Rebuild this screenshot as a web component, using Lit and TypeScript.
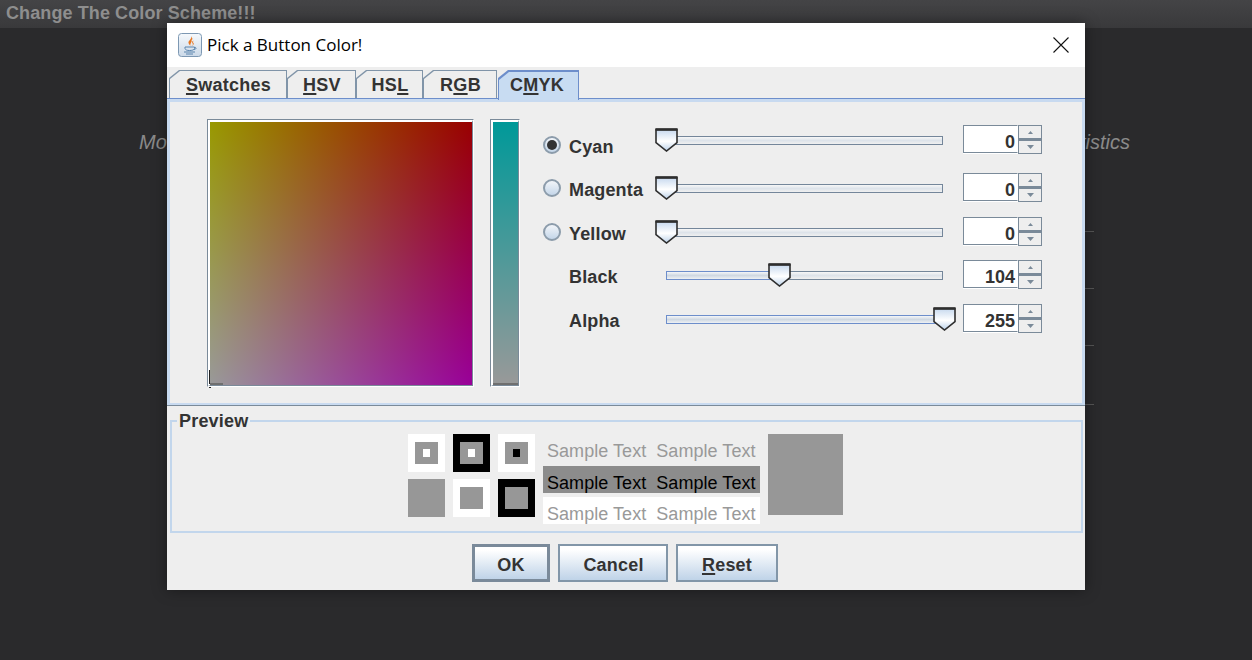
import { LitElement, html, css, svg } from 'lit';
import { customElement } from 'lit/decorators.js';

const TABS = [
  { pre: '', key: 'S', post: 'watches', width: 118 },
  { pre: '', key: 'H', post: 'SV', width: 69 },
  { pre: 'HS', key: 'L', post: '', width: 67 },
  { pre: 'R', key: 'G', post: 'B', width: 74 },
  { pre: 'C', key: 'M', post: 'YK', width: 81, active: true },
];

const LABELS = [
  { name: 'Cyan', radio: true, selected: true },
  { name: 'Magenta', radio: true },
  { name: 'Yellow', radio: true },
  { name: 'Black' },
  { name: 'Alpha' },
];

const VALUES = [0, 0, 0, 104, 255];
const THUMB_RANGE = 278;

const thumb = svg`
  <svg class="thumb-art" width="23" height="24" viewBox="0 0 23 24">
    <defs>
      <linearGradient id="thumb-fill" x1="0" y1="0" x2="0" y2="1">
        <stop offset="0" stop-color="#c6d8ee"></stop>
        <stop offset="0.55" stop-color="#ffffff"></stop>
        <stop offset="1" stop-color="#bcd2ea"></stop>
      </linearGradient>
    </defs>
    <path d="M1 1.500H22V14.500L11.500 23L1 14.500Z" fill="url(#thumb-fill)" stroke="#2e2e2e" stroke-width="1.600"></path>
    <path d="M0.500 1.500H22.500" stroke="#2e2e2e" stroke-width="2.600"></path>
  </svg>`;

@customElement('app-root')
export class AppRoot extends LitElement {
  static styles = css`
    :host {
      display: block;
      position: relative;
      height: 660px;
      overflow: hidden;
      background: #2a2a2c;
      font-family: 'Liberation Sans', Arial, sans-serif;
      color: #333;
    }
    .topbar {
      height: 28px;
      padding-left: 6px;
      background: linear-gradient(#444446, #39393b);
      color: #8e8e8e;
      font-size: 18px;
      font-weight: bold;
      line-height: 27px;
      letter-spacing: 0.1px;
    }
    .intro {
      display: flex;
      justify-content: space-between;
      margin: 0;
      padding: 102px 122px 0 139px;
      color: #8a8a8a;
      font-size: 20px;
      font-style: italic;
      line-height: 24px;
    }
    .rows {
      margin: 20px 158px 0 200px;
    }
    .rows div {
      height: 57px;
      border-bottom: 1px solid #555;
      box-sizing: border-box;
    }
    .rows div:first-child {
      height: 58px;
    }
    .rows div:last-child {
      height: 59px;
    }

    .dialog {
      position: absolute;
      left: 167px;
      top: 23px;
      width: 918px;
      height: 567px;
      display: flex;
      flex-direction: column;
      background: #eeeeee;
      box-shadow: 0 0 14px rgba(0, 0, 0, 0.4);
    }
    .titlebar {
      flex: none;
      height: 44px;
      display: flex;
      align-items: center;
      padding: 0 16px 0 11px;
      background: #fff;
      color: #000;
      font-family: 'Open Sans', sans-serif;
      font-size: 17px;
      line-height: 46px;
    }
    .titlebar .java {
      margin-right: 5px;
    }
    .titlebar .close {
      margin-left: auto;
    }

    .tabs {
      flex: none;
      height: 31px;
      box-sizing: border-box;
      padding: 3px 0 0 2px;
      display: flex;
    }
    .tab {
      box-sizing: border-box;
      height: 28px;
      background: #8094a8;
      clip-path: polygon(0 8px, 10px 0, 100% 0, 100% 100%, 0 100%);
    }
    .tab span {
      display: block;
      height: 27px;
      margin: 1px 1px 0 1px;
      padding-left: 1px;
      background: #eeeeee;
      clip-path: polygon(0 8px, 10px 0, 100% 0, 100% 100%, 0 100%);
      font-size: 18px;
      font-weight: bold;
      line-height: 29px;
      letter-spacing: 0.25px;
      text-align: center;
    }
    .tab.active {
      height: 30px;
      margin-left: 1px;
      background: #6d8ecb;
      position: relative;
      z-index: 1;
    }
    .tab.active span {
      height: 29px;
      margin: 2px 1px 0 1px;
      padding: 0 3px 0 0;
      background: #c8dcf2;
      line-height: 27px;
    }
    u {
      text-decoration-thickness: 2px;
      text-underline-offset: 2px;
    }

    .panel {
      flex: none;
      height: 308px;
      box-sizing: border-box;
      border-top: 1px solid #6d8ecb;
      border-bottom: 1px solid #7a8a99;
    }
    .panel-in {
      height: 100%;
      box-sizing: border-box;
      border: solid #c8daf0;
      border-width: 3px 3px 2px 3px;
      padding: 17px 0 0 37px;
      display: flex;
      align-items: flex-start;
    }
    .well {
      flex: none;
      border: 1px solid;
      border-color: #7a8a99 #fff #fff #7a8a99;
    }
    .well-in {
      position: relative;
      height: 263px;
      border: solid;
      border-width: 2px 1px 1px 2px;
      border-color: #fff #7a8a99 #7a8a99 #fff;
    }
    .square {
      width: 262px;
      background:
        linear-gradient(to right, #009900, #000000),
        linear-gradient(to bottom, #000000, #000099),
        #990000;
      background-blend-mode: screen;
    }
    .strip {
      width: 25px;
      background: linear-gradient(#009999, #999999);
    }
    .well.second {
      margin-left: 16px;
    }
    .bar {
      position: absolute;
      left: 0;
      bottom: 0;
      height: 2px;
      background: #6f6f6f;
    }
    .square .bar {
      width: 13px;
    }
    .strip .bar {
      width: 100%;
    }
    .tick {
      position: absolute;
      left: -1px;
      bottom: 1px;
      width: 1px;
      height: 14px;
      background: #222;
    }
    .dot {
      position: absolute;
      left: -1px;
      bottom: -3px;
      width: 2px;
      height: 1px;
      background: #222;
    }

    .labels {
      flex: none;
      width: 112px;
      margin: 6px 0 0 23px;
      display: grid;
      grid-template-rows: 44px 43px 44px 43px 44px;
    }
    .label {
      display: flex;
      align-items: center;
      padding-left: 26px;
      font-size: 18px;
      font-weight: bold;
      letter-spacing: 0.15px;
    }
    .label.has-radio {
      padding-left: 0;
    }
    .radio {
      flex: none;
      box-sizing: border-box;
      width: 18px;
      height: 18px;
      margin: 0 8px 5px 0;
      border: 2px solid #8c9cab;
      border-radius: 50%;
      background: linear-gradient(#f2f5f9, #c4d6e9);
      display: flex;
      align-items: center;
      justify-content: center;
    }
    .radio i {
      display: block;
      width: 10px;
      height: 10px;
      border-radius: 50%;
      background: #333;
    }
    .controls {
      flex: none;
      margin-top: 6px;
      display: grid;
      grid-template-rows: 48px 44px 43px 44px 29px;
    }
    .control {
      display: flex;
      height: 29px;
      align-items: center;
    }
    .slider {
      position: relative;
      flex: none;
      width: 289px;
      height: 24px;
      margin-right: 19px;
      display: flex;
      align-items: center;
      padding-left: 11px;
      box-sizing: border-box;
    }
    .track {
      width: 277px;
      display: flex;
      margin-top: 1px;
    }
    .fill,
    .rest {
      box-sizing: border-box;
      height: 9px;
      border: 1px solid #74869a;
      background: linear-gradient(#f7f7f7, #dde3ea 50%, #f0f0f0);
    }
    .fill {
      flex: none;
      border-color: #6d8ecb;
      border-right: none;
      background: linear-gradient(#f4f6f8, #cfd8e2 50%, #eef1f4);
    }
    .rest {
      flex: 1;
      border-left: none;
    }
    .thumb {
      position: absolute;
      top: 0;
      height: 24px;
    }
    .thumb-art {
      display: block;
    }
    .spinner {
      flex: none;
      width: 79px;
      height: 29px;
      display: flex;
    }
    .field {
      box-sizing: border-box;
      width: 55px;
      height: 28px;
      padding: 4px 2px 0 0;
      border: 1px solid #7a8a99;
      border-right-color: #fff;
      box-shadow: 0 1px #fff;
      background: #fff;
      font-size: 18px;
      font-weight: bold;
      line-height: 24px;
      text-align: right;
    }
    .steps {
      flex: 1;
      display: grid;
      grid-template-rows: 14px 15px;
    }
    .step {
      box-sizing: border-box;
      border: 1px solid #7a8a99;
      background: #eeeeee;
      display: flex;
      align-items: center;
      justify-content: center;
    }
    .step + .step {
      border-top-width: 2px;
    }

    .preview {
      flex: none;
      position: relative;
      box-sizing: border-box;
      height: 113px;
      margin: 14px 2px 0 3px;
      padding: 12px 2px 0 0;
      border: 2px solid #c2d6ec;
      display: flex;
      justify-content: center;
    }
    .legend {
      position: absolute;
      left: 5px;
      top: -11px;
      padding: 0 2px;
      background: #eeeeee;
      font-size: 18px;
      font-weight: bold;
      line-height: 20px;
      letter-spacing: 0.2px;
    }
    .swatches {
      display: grid;
      grid-template-columns: repeat(3, 37px);
      grid-template-rows: 38px 38px;
      gap: 7px 8px;
    }
    .swatch {
      display: flex;
      align-items: center;
      justify-content: center;
    }
    .swatch b {
      width: 23px;
      height: 22px;
      background: #979797;
      display: flex;
      align-items: center;
      justify-content: center;
    }
    .swatch i {
      display: block;
      width: 7px;
      height: 8px;
    }
    .white {
      background: #fff;
    }
    .black {
      background: #000;
    }
    .gray {
      background: #979797;
    }
    .samples {
      width: 217px;
      margin-left: 8px;
      display: grid;
      grid-template-rows: 32px 27px 27px;
      font-size: 18px;
    }
    .sample {
      box-sizing: border-box;
      display: flex;
      gap: 10px;
      padding: 2px 0 0 4px;
      align-items: center;
      color: #999;
      line-height: 20px;
      letter-spacing: 0.05px;
    }
    .sample.on-gray {
      padding-top: 7px;
      background: #8c8c8c;
      color: #000;
    }
    .sample.on-white {
      padding-top: 7px;
      background: #fff;
      margin-top: 4px;
      height: 27px;
    }
    .big {
      width: 75px;
      height: 81px;
      margin-left: 8px;
      background: #979797;
    }

    .buttons {
      flex: none;
      margin-top: 11px;
      padding-right: 2px;
      display: flex;
      justify-content: center;
      gap: 8px;
    }
    .btn {
      box-sizing: border-box;
      height: 38px;
      border: 2px solid #8296a8;
      background: linear-gradient(#ffffff 10%, #bfd3e8);
      font-size: 18px;
      font-weight: bold;
      line-height: 38px;
      text-align: center;
      letter-spacing: 0.2px;
    }
    .btn.default {
      border: 3px solid #7a8a9a;
      line-height: 36px;
    }
    .btn.nudge {
      padding-left: 1px;
    }
  `;

  renderJavaIcon() {
    return html`
      <svg class="java" width="24" height="24" viewBox="0 0 24 24">
        <defs>
          <linearGradient id="java-bg" x1="0" y1="0" x2="0" y2="1">
            <stop offset="0" stop-color="#f6f9fc"></stop>
            <stop offset="1" stop-color="#cbd9e8"></stop>
          </linearGradient>
        </defs>
        <rect x="0.5" y="0.5" width="23" height="23" rx="3" fill="url(#java-bg)" stroke="#7d98b3"></rect>
        <path d="M13 3C14.5 6 10 7.500 10.500 10C11 11.500 12 12 12.500 13C11.500 10.500 14.500 9 13.500 7C15 6.500 14.500 5 13 3Z" fill="#e8761f"></path>
        <path d="M15.500 7.500C13.500 8.500 14 10 15 11C14.800 12 14 12.500 13.500 13C15.800 12 16.500 10.500 15 9.500C15 8.800 15.200 8 15.500 7.500Z" fill="#e8761f"></path>
        <path d="M7 14H16.500V15.500C16 17 14 17.500 11.500 17.500C9 17.500 7.500 17 7 15.500Z" fill="none" stroke="#5a84ad" stroke-width="1"></path>
        <path d="M16.500 14.500C18.500 14 19 16 16 16.500" fill="none" stroke="#5a84ad" stroke-width="1"></path>
        <path d="M6 19H17M8 21H15" stroke="#5a84ad" stroke-width="1"></path>
      </svg>
    `;
  }

  renderSlider(value: number) {
    const left = Math.round((value / 255) * THUMB_RANGE);
    // fill runs from the track start to the middle of the thumb
    const fill = value > 0 ? left : 0;
    return html`
      <div class="slider">
        <div class="track">
          <div class="fill" style="width:${fill}px"></div>
          <div class="rest"></div>
        </div>
        <div class="thumb" style="left:${left}px">${thumb}</div>
      </div>
    `;
  }

  renderSpinner(value: number) {
    return html`
      <div class="spinner">
        <div class="field">${value}</div>
        <div class="steps">
          <div class="step">
            <svg width="5" height="3" viewBox="0 0 5 3"><path d="M2.500 0L5 3H0Z" fill="#7a8a99"></path></svg>
          </div>
          <div class="step">
            <svg width="7" height="4" viewBox="0 0 7 4"><path d="M0 0H7L3.500 4Z" fill="#7a8a99"></path></svg>
          </div>
        </div>
      </div>
    `;
  }

  renderSwatch(outer: string, inner: string) {
    if (!inner) {
      return html`<div class="swatch ${outer}"></div>`;
    }
    return html`
      <div class="swatch ${outer}">
        <b>${inner === 'none' ? '' : html`<i class="${inner}"></i>`}</b>
      </div>
    `;
  }

  render() {
    return html`
      <div class="topbar">Change The Color Scheme!!!</div>
      <p class="intro"><span>More</span><span>Statistics</span></p>
      <div class="rows"><div></div><div></div><div></div><div></div></div>

      <div class="dialog">
        <div class="titlebar">
          ${this.renderJavaIcon()}
          Pick a Button Color!
          <svg class="close" width="16" height="16" viewBox="0 0 16 16">
            <path d="M0.500 0.500L15.500 15.500M15.500 0.500L0.500 15.500" stroke="#111" stroke-width="1.100"></path>
          </svg>
        </div>

        <div class="tabs">
          ${TABS.map(
            (t) => html`
              <div class="tab ${t.active ? 'active' : ''}" style="width:${t.width}px">
                <span>${t.pre}<u>${t.key}</u>${t.post}</span>
              </div>
            `
          )}
        </div>

        <div class="panel">
          <div class="panel-in">
            <div class="well">
              <div class="well-in square">
                <div class="bar"></div>
                <div class="tick"></div>
                <div class="dot"></div>
              </div>
            </div>
            <div class="well second">
              <div class="well-in strip"><div class="bar"></div></div>
            </div>
            <div class="labels">
              ${LABELS.map(
                (l) => html`
                  <div class="label ${l.radio ? 'has-radio' : ''}">
                    ${l.radio
                      ? html`<div class="radio">${l.selected ? html`<i></i>` : ''}</div>`
                      : ''}
                    ${l.name}
                  </div>
                `
              )}
            </div>
            <div class="controls">
              ${VALUES.map(
                (v) => html`
                  <div class="control">${this.renderSlider(v)}${this.renderSpinner(v)}</div>
                `
              )}
            </div>
          </div>
        </div>

        <div class="preview">
          <div class="legend">Preview</div>
          <div class="swatches">
            ${this.renderSwatch('white', 'white')}
            ${this.renderSwatch('black', 'white')}
            ${this.renderSwatch('white', 'black')}
            ${this.renderSwatch('gray', '')}
            ${this.renderSwatch('white', 'none')}
            ${this.renderSwatch('black', 'none')}
          </div>
          <div class="samples">
            <div class="sample"><span>Sample Text</span><span>Sample Text</span></div>
            <div class="sample on-gray"><span>Sample Text</span><span>Sample Text</span></div>
            <div class="sample on-white"><span>Sample Text</span><span>Sample Text</span></div>
          </div>
          <div class="big"></div>
        </div>

        <div class="buttons">
          <div class="btn default" style="width:78px">OK</div>
          <div class="btn nudge" style="width:110px">Cancel</div>
          <div class="btn" style="width:102px"><u>R</u>eset</div>
        </div>
      </div>
    `;
  }
}
